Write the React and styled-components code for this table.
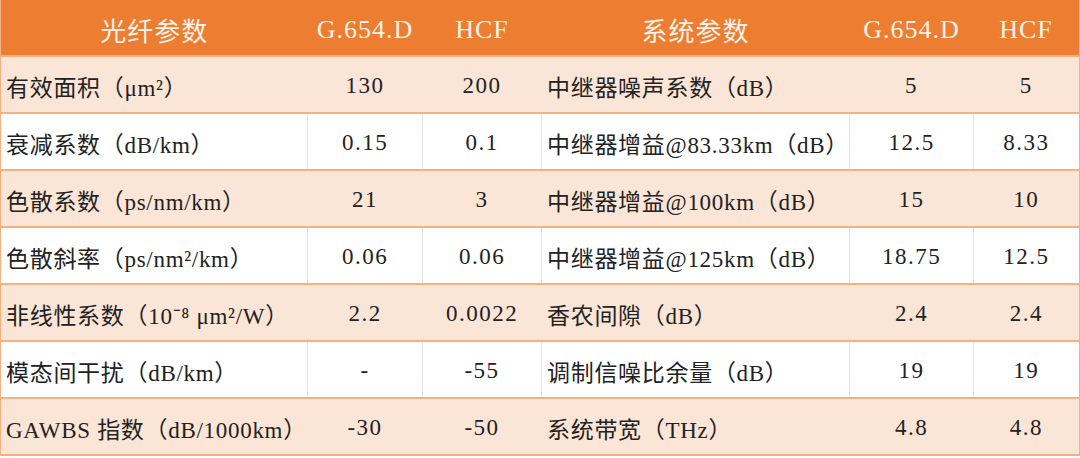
import React from 'react';
import styled, { createGlobalStyle } from 'styled-components';

const GlobalStyle = createGlobalStyle`
    html, body {
        margin: 0;
        padding: 0;
        background: #ffffff;
    }
`;

const Table = styled.table`
    width: 1079px;
    table-layout: fixed;
    border-collapse: collapse;
    font-family: "Liberation Serif", "Noto Sans CJK SC", serif;
    color: #222222;
    border-left: 1px solid #f4b183;
    border-right: 2px solid #f4b183;
`;

const HeadRow = styled.tr`
    background: #ed7d31;
    border-bottom: 2px solid #f4b183;
`;

const HeadCell = styled.th`
    height: 51px;
    padding: 4px 0 0;
    font-size: 26px;
    font-weight: 400;
    letter-spacing: 1px;
    color: #fdf3ea;
    text-align: center;
    white-space: nowrap;
`;

const Row = styled.tr`
    background: ${({ $shade }) => ($shade ? '#fbe5d6' : '#ffffff')};
    border-bottom: 2px solid #f4b183;
`;

const Cell = styled.td`
    height: 52px;
    padding: 3px 0 0 ${({ $label }) => ($label ? '5px' : '0')};
    font-size: 23px;
    letter-spacing: ${({ $label }) => ($label ? '0.7px' : '1.5px')};
    text-align: ${({ $label }) => ($label ? 'left' : 'center')};
    white-space: nowrap;
    border-left: 1px solid ${({ $shade }) => ($shade ? '#fbe5d6' : '#e4e4e4')};
    &:first-child {
        border-left: none;
    }
`;

const colWidths = [307, 115, 119, 308, 124, 106];

const heads = ['光纤参数', 'G.654.D', 'HCF', '系统参数', 'G.654.D', 'HCF'];

const rows = [
    ['有效面积（μm²）', '130', '200', '中继器噪声系数（dB）', '5', '5'],
    ['衰减系数（dB/km）', '0.15', '0.1', '中继器增益@83.33km（dB）', '12.5', '8.33'],
    ['色散系数（ps/nm/km）', '21', '3', '中继器增益@100km（dB）', '15', '10'],
    ['色散斜率（ps/nm²/km）', '0.06', '0.06', '中继器增益@125km（dB）', '18.75', '12.5'],
    ['非线性系数（10⁻⁸ μm²/W）', '2.2', '0.0022', '香农间隙（dB）', '2.4', '2.4'],
    ['模态间干扰（dB/km）', '-', '-55', '调制信噪比余量（dB）', '19', '19'],
    ['GAWBS 指数（dB/1000km）', '-30', '-50', '系统带宽（THz）', '4.8', '4.8'],
];

const App = () => {
    return (
        <>
            <GlobalStyle />
            <Table>
                <colgroup>
                    {colWidths.map((w, i) => (
                        <col key={i} style={{ width: w }} />
                    ))}
                </colgroup>
                <thead>
                    <HeadRow>
                        {heads.map((h, i) => (
                            <HeadCell key={i}>{h}</HeadCell>
                        ))}
                    </HeadRow>
                </thead>
                <tbody>
                    {rows.map((r, ri) => {
                        const shade = ri % 2 === 0;
                        return (
                            <Row key={ri} $shade={shade}>
                                {r.map((c, ci) => (
                                    <Cell key={ci} $shade={shade} $label={ci === 0 || ci === 3}>
                                        {c}
                                    </Cell>
                                ))}
                            </Row>
                        );
                    })}
                </tbody>
            </Table>
        </>
    );
};

export default App;
